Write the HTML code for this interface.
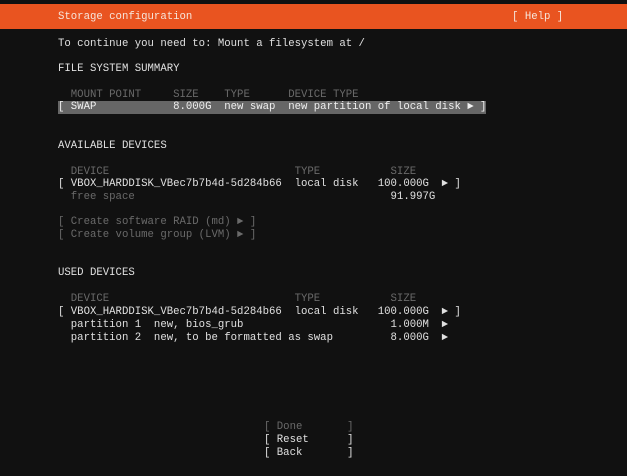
<!DOCTYPE html><html><head><style>
body{margin:0;width:627px;height:476px;background:#111;overflow:hidden;font-family:"Liberation Mono",monospace;}
.bar{position:absolute;left:0;top:4px;width:627px;height:25px;background:#e95420;}
pre{position:absolute;left:58px;margin:0;font-size:10.67px;line-height:13px;color:#e0e0e0;white-space:pre;font-family:"Liberation Mono",monospace;}
.d{color:#6a6a6a}
.hl{background:#666;color:#f0f0f0}
</style></head><body>
<div class="bar"></div>
<pre style="top:11px;color:#f6e6dc">Storage configuration                                                  [ Help ]</pre>
<pre style="top:38px">To continue you need to: Mount a filesystem at /</pre>
<pre style="top:63px">FILE SYSTEM SUMMARY</pre>
<pre style="top:89px" class="d">  MOUNT POINT     SIZE    TYPE      DEVICE TYPE</pre>
<pre style="top:101px" class="hl">[ SWAP            8.000G  new swap  new partition of local disk ► ]</pre>
<pre style="top:140px">AVAILABLE DEVICES</pre>
<pre style="top:166px" class="d">  DEVICE                             TYPE           SIZE</pre>
<pre style="top:178px">[ VBOX_HARDDISK_VBec7b7b4d-5d284b66  local disk   100.000G  ► ]</pre>
<pre style="top:191px"><span class="d">  free space</span>                                        91.997G</pre>
<pre style="top:216px" class="d">[ Create software RAID (md) ► ]</pre>
<pre style="top:229px" class="d">[ Create volume group (LVM) ► ]</pre>
<pre style="top:267px">USED DEVICES</pre>
<pre style="top:293px" class="d">  DEVICE                             TYPE           SIZE</pre>
<pre style="top:306px">[ VBOX_HARDDISK_VBec7b7b4d-5d284b66  local disk   100.000G  ► ]</pre>
<pre style="top:319px">  partition 1  new, bios_grub                       1.000M  ►</pre>
<pre style="top:332px">  partition 2  new, to be formatted as swap         8.000G  ►</pre>
<pre style="top:421px;left:264px" class="d">[ Done       ]</pre>
<pre style="top:434px;left:264px">[ Reset      ]</pre>
<pre style="top:447px;left:264px">[ Back       ]</pre>
</body></html>
